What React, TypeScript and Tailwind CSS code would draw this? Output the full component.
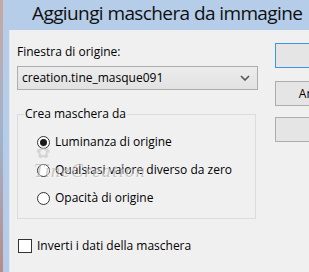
import React from 'react'

const ui = { fontFamily: '"Open Sans", "Noto Sans", sans-serif' }

const Radio = ({ checked, label }: { checked?: boolean; label: string }) => (
  <div className="flex items-center h-[16px]">
    <div className="w-[13px] h-[13px] rounded-full border border-[#333333] bg-white flex items-center justify-center shrink-0">
      {checked && <div className="w-[7px] h-[7px] rounded-full bg-[#1a1a1a]" />}
    </div>
    <span className="ml-[5px] text-[12px] leading-[16px] text-black whitespace-nowrap">{label}</span>
  </div>
)

export default function App() {
  return (
    <div className="w-[309px] h-[272px] overflow-hidden flex" style={ui}>
      {/* bit of the picture behind the dialog */}
      <div className="w-[3px] h-full bg-gradient-to-b from-[#c9a7a0] via-[#9fb3cc] to-[#b88b86] shrink-0" />

      <div className="flex-1 flex flex-col min-w-0">
        {/* title bar */}
        <div className="h-[30px] bg-[#b5cde8] pl-[29px] shrink-0">
          <span className="text-[19px] leading-[27px] tracking-[-0.6px] text-[#101010] whitespace-nowrap">
            Aggiungi maschera da immagine
          </span>
        </div>

        <div className="flex-1 flex min-h-0">
          <div className="w-[6px] bg-[#b5cde8] shrink-0" />
          <div className="w-[1px] bg-[#dfe7f0] shrink-0" />

          {/* dialog body */}
          <div className="flex-1 bg-[#f0f0f0] flex pt-[14px] pl-[7px] overflow-hidden">
            <div className="w-[241px] shrink-0 flex flex-col">
              <div className="text-[12px] leading-[16px] text-black">Finestra di origine:</div>

              <div className="mt-[6px] h-[24px] border border-[#adadad] bg-gradient-to-b from-[#ececec] to-[#e2e2e2] flex items-center justify-between pl-[4px] pr-[6px]">
                <span className="text-[12px] leading-[16px] text-black">creation.tine_masque091</span>
                <svg width="10" height="6" viewBox="0 0 10 6" className="mr-[1px]">
                  <path d="M1 1 L5 5 L9 1" fill="none" stroke="#555555" strokeWidth="1.6" />
                </svg>
              </div>

              <fieldset className="mt-[16px] w-[239px] border border-[#dcdcdc] relative">
                <legend className="ml-[6px] px-[1px] text-[12px] leading-[16px] text-black">Crea maschera da</legend>
                <div className="flex flex-col gap-[12px] pl-[19px] pt-[12px] pb-[12px]">
                  <Radio checked label="Luminanza di origine" />
                  <Radio label="Qualsiasi valore diverso da zero" />
                  <Radio label="Opacità di origine" />
                </div>
                {/* watermark */}
                <div className="absolute left-[16px] top-[22px] pointer-events-none select-none opacity-60">
                  <div className="ml-[2px] text-[17px] leading-[16px] text-[#c4c4c4]">✿</div>
                  <div
                    className="mt-[3px] text-[18px] leading-[16px] italic text-[#a8a8a8] tracking-[1.5px] whitespace-nowrap"
                    style={{ fontFamily: '"Liberation Serif", serif', textShadow: '1px 1px 0 #ffffff' }}
                  >
                    TineCreation
                  </div>
                </div>
              </fieldset>

              <div className="mt-[19px] flex items-center h-[16px] ml-[1px]">
                <div className="w-[14px] h-[14px] border border-[#333333] bg-white shrink-0" />
                <span className="ml-[5px] text-[12px] leading-[16px] text-black whitespace-nowrap">
                  Inverti i dati della maschera
                </span>
              </div>
            </div>

            {/* buttons */}
            <div className="ml-[17px] flex flex-col shrink-0">
              <div className="-mt-[1px] w-[90px] h-[25px] border border-[#3c96e6] bg-[#e5e5e5] flex items-center justify-center text-[12px] text-black">
                OK
              </div>
              <div className="mt-[13px] w-[90px] h-[25px] border border-[#adadad] bg-[#e5e5e5] flex items-center justify-center text-[12px] text-black">
                Annulla
              </div>
              <div className="mt-[11px] w-[90px] h-[25px] border border-[#adadad] bg-[#e5e5e5]" />
            </div>
          </div>
        </div>
      </div>
    </div>
  )
}
